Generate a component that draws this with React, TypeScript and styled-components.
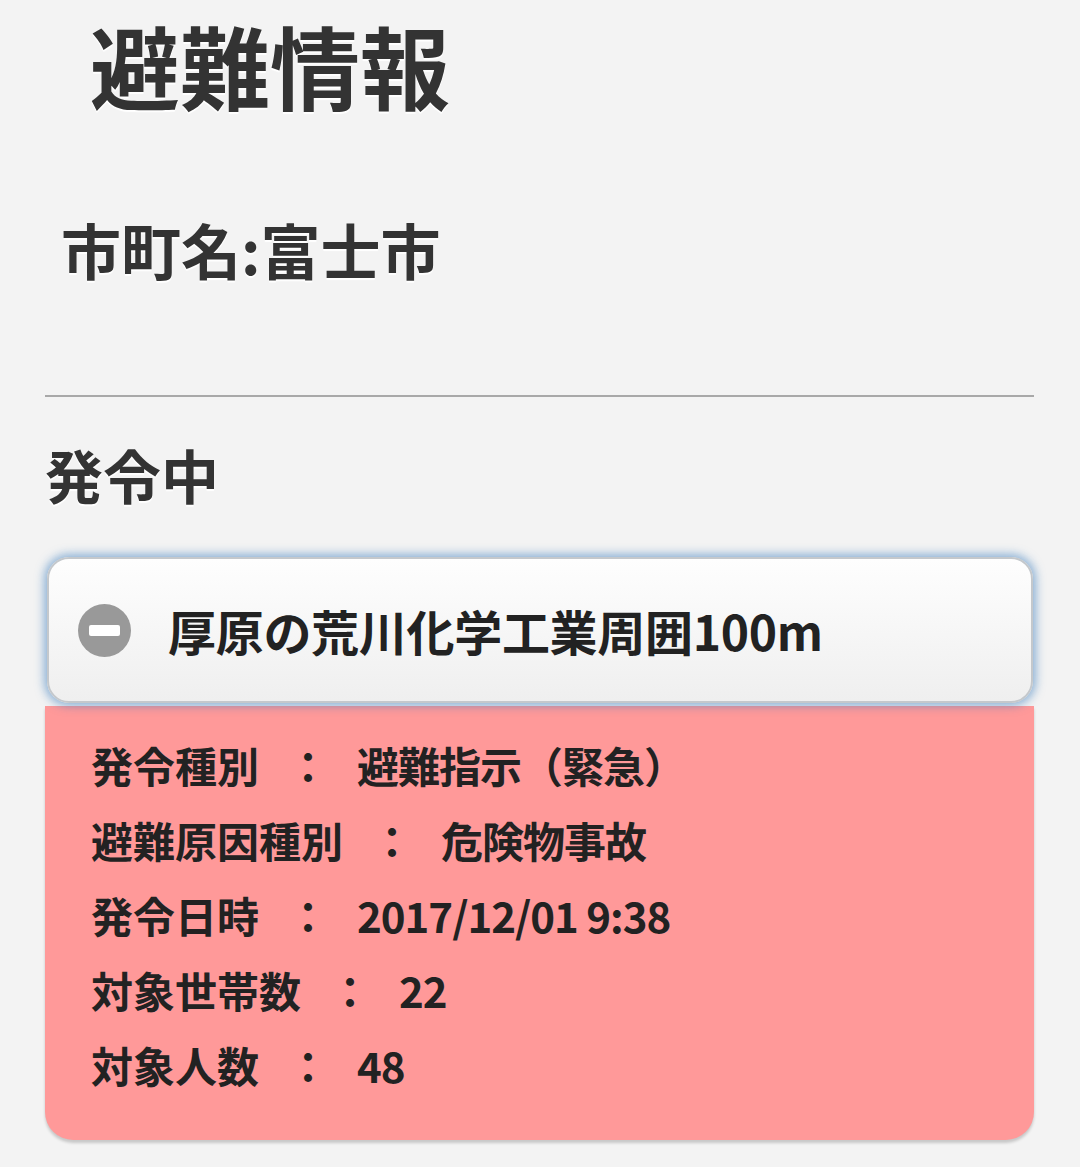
import React from 'react';
import styled, { createGlobalStyle } from 'styled-components';

const GlobalStyle = createGlobalStyle`
  html, body {
    margin: 0;
    padding: 0;
    background: #f3f3f3;
  }
  body {
    font-family: "Noto Sans CJK JP", "Noto Sans", sans-serif;
    color: #333;
  }
`

const Page = styled.div`
  display: flex;
  flex-direction: column;
  padding: 19px 46px 40px 45px;
`

const Title = styled.h1`
  margin: 0 0 0 45px;
  font-size: 90px;
  line-height: 90px;
  font-weight: 700;
  color: #333;
  text-shadow: 0 2px 1px #fff;
`

const City = styled.h2`
  margin: 110px 0 0 16px;
  font-size: 60px;
  line-height: 60px;
  font-weight: 700;
  color: #333;
  text-shadow: 0 2px 1px #fff;
`

const Rule = styled.hr`
  margin: 116px 0 0 0;
  border: none;
  height: 2px;
  background: #a8a8a8;
`

const Status = styled.h3`
  margin: 48px 0 0 0;
  font-size: 58px;
  line-height: 58px;
  font-weight: 700;
  color: #333;
  text-shadow: 0 2px 1px #fff;
`

const Collapsible = styled.div`
  margin: 54px 0 0 0;
  display: flex;
  flex-direction: column;
`

const Header = styled.div`
  display: flex;
  align-items: center;
  gap: 37px;
  height: 142px;
  margin: 0 1px 0 2px;
  padding: 0 0 0 29px;
  border: 2px solid #c4c8cc;
  border-radius: 22px;
  background: linear-gradient(#fefefe, #efefef);
  box-shadow: 0 0 10px 3px rgba(56, 123, 190, 0.55);
  position: relative;
  z-index: 1;
`

const HeaderText = styled.span`
  font-size: 48px;
  font-weight: 700;
  color: #222;
  line-height: 1;
  letter-spacing: -0.3px;
`

const Content = styled.div`
  margin-top: 3px;
  padding: 21px 0 38px 46px;
  background: #ff9999;
  border-radius: 0 0 28px 28px;
  box-shadow: 0 3px 3px rgba(0, 0, 0, 0.18);
`

const Row = styled.div`
  display: flex;
  align-items: center;
  height: 75px;
  font-size: 42px;
  font-weight: 700;
  color: #222;
`

const Colon = styled.span`
  width: 42px;
  margin: 0 28px;
  text-align: center;
`

const Value = styled.span`
  letter-spacing: -1px;
`

const MinusIcon = () => (
  <svg width="53" height="53" viewBox="0 0 53 53">
    <circle cx="26.5" cy="26.5" r="26.5" fill="#999" />
    <rect x="11" y="21" width="31" height="11" rx="2" fill="#fff" />
  </svg>
)

const details: [string, string][] = [
  ['発令種別', '避難指示（緊急）'],
  ['避難原因種別', '危険物事故'],
  ['発令日時', '2017/12/01 9:38'],
  ['対象世帯数', '22'],
  ['対象人数', '48'],
]

const App: React.FC = () => {
  return (
    <>
      <GlobalStyle />
      <Page>
        <Title>避難情報</Title>
        <City>市町名:富士市</City>
        <Rule />
        <Status>発令中</Status>
        <Collapsible>
          <Header>
            <MinusIcon />
            <HeaderText>厚原の荒川化学工業周囲100m</HeaderText>
          </Header>
          <Content>
            {details.map(([label, value]) => (
              <Row key={label}>
                <span>{label}</span>
                <Colon>：</Colon>
                <Value>{value}</Value>
              </Row>
            ))}
          </Content>
        </Collapsible>
      </Page>
    </>
  );
}

export default App;
